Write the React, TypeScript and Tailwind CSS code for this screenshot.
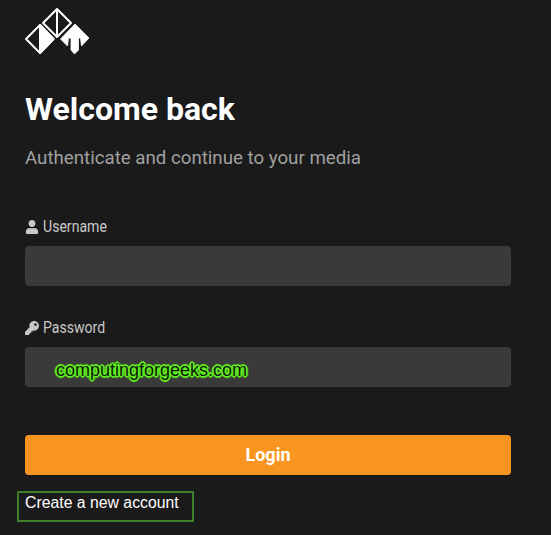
import { FaKey, FaUser } from "react-icons/fa";

function Logo() {
  return (
    <svg width="66" height="48" viewBox="25 7 66 48" className="block">
      <path d="M57 9 L71 23 L57 37 L43 23 Z" fill="none" stroke="#fff" strokeWidth="2" strokeLinejoin="round" />
      <path d="M57 9 V37" stroke="#fff" strokeWidth="2" />
      <path d="M40 25 L53.5 39 L40 53 L26 39 Z" fill="none" stroke="#fff" strokeWidth="2" strokeLinejoin="round" />
      <path d="M40 25 L53.5 39 L40 53 Z" fill="#fff" stroke="#fff" strokeWidth="2" strokeLinejoin="round" />
      <path
        d="M75 24 L89 38 L81.5 46 L80.5 38 L78.5 38 V50 L74.5 54 L71 50 V38 L68.5 38 L67.5 46 L60.5 39 Z"
        fill="#fff"
        stroke="#fff"
        strokeWidth="0.8"
        strokeLinejoin="round"
      />
    </svg>
  );
}

export default function App() {
  return (
    <div className="h-[535px] overflow-hidden bg-[#1a1a1a] pl-[25px] pr-[40px] pt-[7px] font-['Roboto',sans-serif]">
      <Logo />

      <h1 className="mt-[36px] text-[32px] leading-[36px] font-bold text-white">Welcome back</h1>
      <p className="mt-[19px] text-[18.7px] leading-[24px] text-[#a0a0a0]">Authenticate and continue to your media</p>

      <form className="mt-[47px]">
        <label className="flex items-center gap-[4px] text-[#c8c8c8]">
          <FaUser className="text-[14px]" />
          <span className="origin-left scale-x-[0.88] text-[16px] leading-[20px]">Username</span>
        </label>
        <div className="mt-[9px] h-[40px] rounded-[4px] bg-[#3a3a3a]" />

        <label className="mt-[32px] flex items-center gap-[4px] text-[#c8c8c8]">
          <FaKey className="text-[14px]" />
          <span className="origin-left scale-x-[0.88] text-[16px] leading-[20px]">Password</span>
        </label>
        <div className="relative mt-[9px] h-[40px] rounded-[4px] bg-[#3a3a3a]">
          <span className="absolute left-[31px] top-[12px] font-['Liberation_Sans',sans-serif] text-[18px] leading-[22px] text-[#0a1a0a] [text-shadow:1px_0_0_#62ee1e,-1px_0_0_#62ee1e,0_1px_0_#62ee1e,0_-1px_0_#62ee1e,1px_1px_0_#62ee1e,-1px_-1px_0_#62ee1e,1px_-1px_0_#62ee1e,-1px_1px_0_#62ee1e,2px_0_1px_#62ee1e,-2px_0_1px_#62ee1e,0_2px_1px_#62ee1e,0_-2px_1px_#62ee1e]">
            computingforgeeks.com
          </span>
        </div>

        <button
          type="button"
          className="mt-[48px] block h-[40px] w-full rounded-[4px] bg-[#f79520] pb-[1px] text-[18px] font-bold text-white"
        >
          Login
        </button>
      </form>

      <div className="mt-[16px] -ml-[8px]">
        <a className="inline-block h-[31px] w-[177px] border-2 border-[#3f7f2a] pl-[6px] font-['Liberation_Sans',sans-serif] text-[15.8px] leading-[19px] text-white">
          Create a new account
        </a>
      </div>
    </div>
  );
}
